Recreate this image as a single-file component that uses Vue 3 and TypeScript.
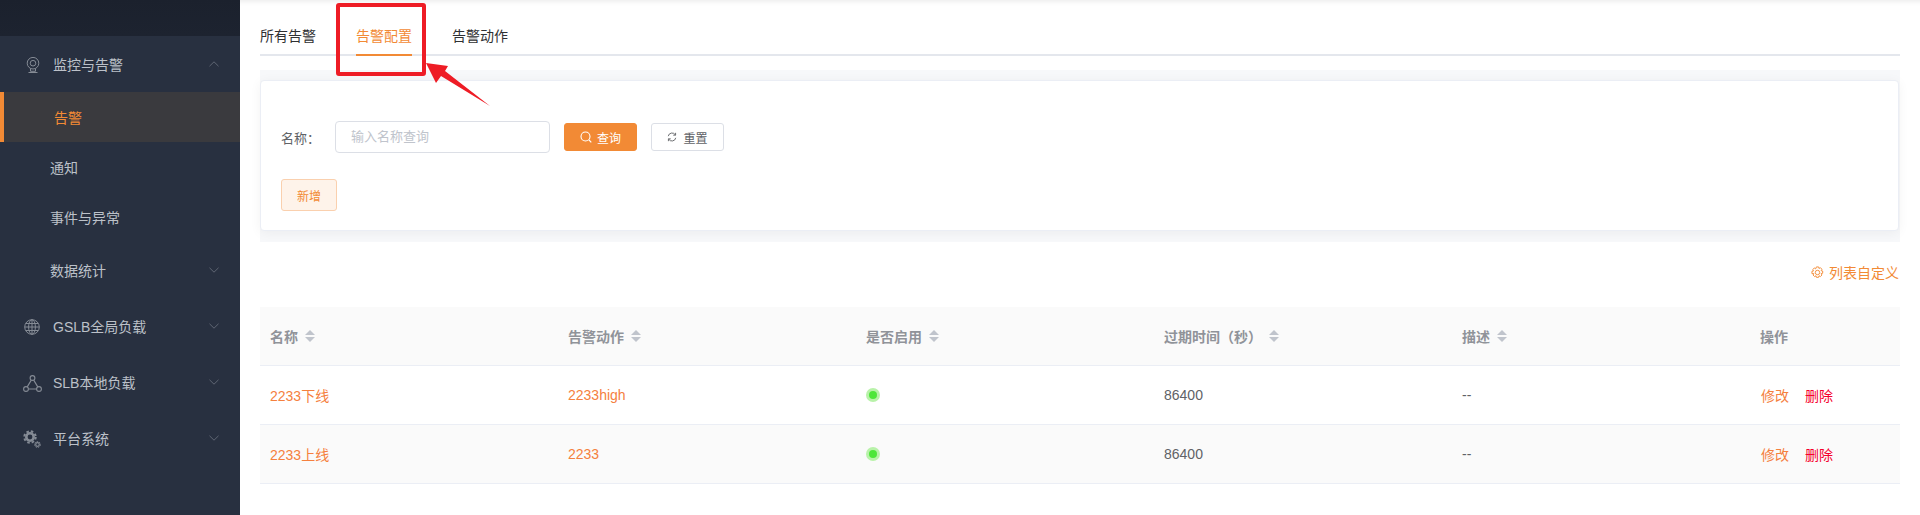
<script setup lang="ts">
interface Row {
  name: string;
  action: string;
  expire: number;
  desc: string;
}

const columns = ["名称", "告警动作", "是否启用", "过期时间（秒）", "描述"];

const rows: Row[] = [
  { name: "2233下线", action: "2233high", expire: 86400, desc: "--" },
  { name: "2233上线", action: "2233", expire: 86400, desc: "--" },
];
</script>

<template>
  <div class="page">
    <aside class="sidebar">
      <div class="sidebar__top"></div>
      <div class="menu-item">
        <svg class="menu-icon menu-icon--cam" viewBox="0 0 14 16" fill="none" stroke="currentColor" stroke-width="1">
          <circle cx="7" cy="6.200" r="5.800" />
          <circle cx="7" cy="6.200" r="2.800" />
          <path d="M4.500 11.500v2.800h5v-2.800M2.500 15.500h9" />
        </svg>
        <span>监控与告警</span>
        <svg class="chevron" viewBox="0 0 10 6" fill="none" stroke="currentColor"><path d="M.5 5.200 5 .8l4.500 4.400" /></svg>
      </div>
      <div class="sub-item sub-item--active">告警</div>
      <div class="sub-item">通知</div>
      <div class="sub-item">事件与异常</div>
      <div class="sub-item sub-item--tall">
        <span>数据统计</span>
        <svg class="chevron" viewBox="0 0 10 6" fill="none" stroke="currentColor"><path d="M.5.8 5 5.200 9.500.8" /></svg>
      </div>
      <div class="menu-item">
        <svg class="menu-icon menu-icon--globe" viewBox="0 0 16 16" fill="none" stroke="currentColor" stroke-width="1">
          <circle cx="8" cy="8" r="7.300" />
          <ellipse cx="8" cy="8" rx="3.400" ry="7.300" />
          <path d="M.8 8h14.400M2 4.500h12M2 11.500h12M8 .8v14.400" />
        </svg>
        <span>GSLB全局负载</span>
        <svg class="chevron" viewBox="0 0 10 6" fill="none" stroke="currentColor"><path d="M.5.8 5 5.200 9.500.8" /></svg>
      </div>
      <div class="menu-item">
        <svg class="menu-icon menu-icon--net" viewBox="0 0 19 17" fill="none" stroke="currentColor" stroke-width="1.100">
          <circle cx="9.500" cy="3" r="2.400" />
          <circle cx="3" cy="14" r="2.400" />
          <circle cx="16" cy="14" r="2.400" />
          <path d="M8.300 5.100 4.200 11.900M10.700 5.100l4.100 6.800M5.400 14h8.200" />
        </svg>
        <span>SLB本地负载</span>
        <svg class="chevron" viewBox="0 0 10 6" fill="none" stroke="currentColor"><path d="M.5.8 5 5.200 9.500.8" /></svg>
      </div>
      <div class="menu-item">
        <svg class="menu-icon menu-icon--gear" viewBox="0 0 18 18" fill="none" stroke="currentColor">
          <circle cx="7" cy="7" r="3.700" stroke-width="2.600" />
          <circle cx="7" cy="7" r="5.700" stroke-width="2" stroke-dasharray="2.500 2" />
          <circle cx="14.500" cy="14.500" r="1.800" stroke-width="1.200" />
          <circle cx="14.500" cy="14.500" r="2.900" stroke-width="1" stroke-dasharray="1.500 1" />
        </svg>
        <span>平台系统</span>
        <svg class="chevron" viewBox="0 0 10 6" fill="none" stroke="currentColor"><path d="M.5.8 5 5.200 9.500.8" /></svg>
      </div>
    </aside>

    <main class="main">
      <nav class="tabs">
        <span class="tab">所有告警</span>
        <span class="tab tab--active">告警配置</span>
        <span class="tab">告警动作</span>
      </nav>

      <section class="filter-band">
        <div class="filter-card">
          <div class="filter-row">
            <label class="filter-label">名称：</label>
            <div class="input">输入名称查询</div>
            <button class="btn btn--primary">
              <svg class="btn__icon" viewBox="0 0 12 12" fill="none" stroke="currentColor" stroke-width="1.100">
                <circle cx="5.500" cy="5.500" r="4.500" />
                <path d="m9 9 2.300 2.300" />
              </svg>
              查询
            </button>
            <button class="btn btn--plain">
              <svg class="btn__icon btn__icon--small" viewBox="0 0 12 12" fill="none" stroke="currentColor" stroke-width="1.100">
                <path d="M1.500 5A4.600 4.600 0 0 1 10 3.500M10.500 7A4.600 4.600 0 0 1 2 8.500" />
                <path d="M10.300 1v2.800H7.500M1.700 11V8.200h2.800" />
              </svg>
              重置
            </button>
          </div>
          <button class="btn-add">新增</button>
        </div>
      </section>

      <div class="table-tools">
        <svg class="tools-icon" viewBox="0 0 14 14" fill="none" stroke="currentColor">
          <circle cx="7" cy="7" r="2.400" stroke-width="1" />
          <path
            stroke-width="1"
            d="M5.800 1h2.400l.4 1.700 1.500-.9 1.700 1.700-.9 1.500 1.700.4v2.400l-1.700.4.9 1.500-1.700 1.700-1.500-.9-.4 1.700H5.800l-.4-1.700-1.500.9-1.700-1.700.9-1.500L1 8.200V5.800l1.700-.4-.9-1.500 1.700-1.700 1.500.9z"
          />
        </svg>
        列表自定义
      </div>

      <table class="table">
        <colgroup>
          <col v-for="c in columns" :key="c" class="col" />
          <col />
        </colgroup>
        <thead>
          <tr>
            <th v-for="c in columns" :key="c">
              <span class="th-inner">
                {{ c }}
                <span class="sort">
                  <i class="sort__up"></i>
                  <i class="sort__down"></i>
                </span>
              </span>
            </th>
            <th>操作</th>
          </tr>
        </thead>
        <tbody>
          <tr v-for="row in rows" :key="row.name">
            <td class="link">{{ row.name }}</td>
            <td class="link">{{ row.action }}</td>
            <td><span class="dot"></span></td>
            <td>{{ row.expire }}</td>
            <td>{{ row.desc }}</td>
            <td class="ops">
              <span class="link op">修改</span>
              <span class="danger">删除</span>
            </td>
          </tr>
        </tbody>
      </table>
    </main>

    <!-- annotation drawn over the screenshot -->
    <div class="mark-box"></div>
    <svg class="mark-arrow" viewBox="0 0 70 50">
      <polygon points="1,3 23,6 20,11 65,46 16,16 11,23" fill="#ee1c25" />
    </svg>
  </div>
</template>

<style scoped>
.page {
  position: relative;
  display: flex;
  width: 1920px;
  height: 515px;
  overflow: hidden;
  background: #fff;
  font-family: "Liberation Sans", "Noto Sans CJK SC", sans-serif;
  font-size: 14px;
  color: #606266;
}

.sidebar {
  flex: 0 0 240px;
  background: #283040;
  color: #bcc1c9;
}

.sidebar__top {
  height: 36px;
  background: linear-gradient(#1b212d, #1d2330);
}

.menu-item,
.sub-item {
  position: relative;
  display: flex;
  align-items: center;
}

.menu-item {
  height: 56px;
  padding-left: 53px;
}

.menu-icon {
  position: absolute;
  color: #858b95;
}

.menu-icon--cam {
  left: 26px;
  top: 21px;
  width: 14px;
  height: 16px;
}

.menu-icon--globe {
  left: 24px;
  top: 21px;
  width: 16px;
  height: 16px;
}

.menu-icon--net {
  left: 23px;
  top: 21px;
  width: 19px;
  height: 17px;
}

.menu-icon--gear {
  left: 23px;
  top: 20px;
  width: 18px;
  height: 18px;
}

.chevron {
  position: absolute;
  right: 21px;
  top: 25px;
  width: 10px;
  height: 6px;
  color: #5f6673;
}

.sub-item {
  height: 50px;
  padding-left: 50px;
}

.sub-item--tall {
  height: 56px;
}

.sub-item--active {
  border-left: 4px solid #f28a35;
  background: #3a3a3e;
  color: #f28a35;
}

.main {
  flex: 1;
  min-width: 0;
  padding: 0 20px;
  box-shadow: inset 0 7px 6px -7px rgba(0, 0, 0, 0.12);
}

.tabs {
  display: flex;
  gap: 40px;
  box-sizing: border-box;
  height: 56px;
  border-bottom: 2px solid #e4e7ed;
}

.tab {
  box-sizing: border-box;
  height: 56px;
  line-height: 72px;
  color: #303133;
}

.tab--active {
  color: #f28a35;
  border-bottom: 2px solid #f28a35;
}

.filter-band {
  margin-top: 14px;
  padding: 10px 0 11px;
  background: #f7f8fa;
}

.filter-card {
  box-sizing: border-box;
  height: 151px;
  margin-right: 1px;
  padding: 40px 20px 0;
  background: #fff;
  border: 1px solid #ebeef5;
  border-radius: 4px;
  box-shadow: 0 2px 12px rgba(0, 0, 0, 0.05);
}

.filter-row {
  display: flex;
  align-items: center;
  height: 32px;
}

.filter-label {
  width: 54px;
  font-size: 13px;
  color: #606266;
}

.input {
  box-sizing: border-box;
  width: 215px;
  height: 32px;
  padding-left: 15px;
  line-height: 30px;
  font-size: 13px;
  color: #c0c4cc;
  border: 1px solid #dcdfe6;
  border-radius: 4px;
}

.btn {
  display: flex;
  align-items: center;
  justify-content: center;
  box-sizing: border-box;
  width: 73px;
  height: 28px;
  padding: 0;
  font: inherit;
  font-size: 12px;
  border-radius: 3px;
}

.btn--primary {
  margin-left: 14px;
  color: #fff;
  background: #f28a35;
  border: 1px solid #f28a35;
}

.btn--plain {
  margin-left: 14px;
  color: #606266;
  background: #fff;
  border: 1px solid #dcdfe6;
}

.btn__icon {
  width: 12px;
  height: 12px;
  margin-right: 5px;
}

.btn__icon--small {
  width: 10px;
  height: 10px;
  margin-right: 6px;
}

.btn-add {
  display: block;
  width: 56px;
  height: 32px;
  margin-top: 26px;
  padding: 0;
  font: inherit;
  font-size: 12px;
  color: #f28a35;
  background: #fef3ea;
  border: 1px solid #fad0ae;
  border-radius: 3px;
}

.table-tools {
  display: flex;
  align-items: center;
  justify-content: flex-end;
  box-sizing: border-box;
  height: 65px;
  padding: 0 1px 5px 0;
  color: #f28a35;
}

.tools-icon {
  width: 13px;
  height: 13px;
  margin-right: 5px;
}

.table {
  width: 100%;
  table-layout: fixed;
  border-collapse: separate;
  border-spacing: 0;
}

.col {
  width: 298px;
}

th,
td {
  box-sizing: border-box;
  height: 59px;
  padding: 0 10px;
  text-align: left;
  border-bottom: 1px solid #ebeef5;
}

th {
  font-weight: 700;
  color: #909399;
  background: #fafafa;
}

tbody tr:nth-child(2) td {
  background: #fafafa;
}

.th-inner {
  display: inline-flex;
  align-items: center;
  gap: 7px;
}

.sort {
  display: inline-flex;
  flex-direction: column;
  gap: 2px;
}

.sort__up,
.sort__down {
  width: 0;
  height: 0;
  border-left: 5px solid transparent;
  border-right: 5px solid transparent;
}

.sort__up {
  border-bottom: 5px solid #c0c4cc;
}

.sort__down {
  border-top: 5px solid #c0c4cc;
}

.link {
  color: #f5803e;
}

.op {
  margin-right: 16px;
}

td.ops {
  padding-left: 11px;
}

.danger {
  color: #f5002d;
}

.dot {
  display: block;
  width: 8px;
  height: 8px;
  margin-left: 3px;
  border-radius: 50%;
  background: #4ee63a;
  box-shadow: 0 0 0 3px #b8f2a9;
}

.mark-box {
  position: absolute;
  left: 336px;
  top: 3px;
  box-sizing: border-box;
  width: 90px;
  height: 73px;
  border: 4px solid #ee1c25;
  border-radius: 3px;
}

.mark-arrow {
  position: absolute;
  left: 425px;
  top: 60px;
  width: 70px;
  height: 50px;
}
</style>
